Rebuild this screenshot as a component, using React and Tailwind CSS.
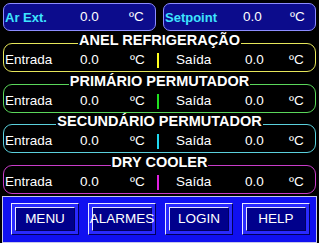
import React from "react";

const sections = [
  { title: "ANEL REFRIGERAÇÃO", border: "border-[#e6e65a]", div: "bg-[#ffff20]", mt: "mt-[12px]" },
  { title: "PRIMÁRIO PERMUTADOR", border: "border-[#5ad65a]", div: "bg-[#20e020]", mt: "mt-[12px]" },
  { title: "SECUNDÁRIO PERMUTADOR", border: "border-[#5ad0dc]", div: "bg-[#20d8f0]", mt: "mt-[11px]" },
  { title: "DRY COOLER", border: "border-[#c83cc8]", div: "bg-[#e020e0]", mt: "mt-[12px]" },
];

const buttons = ["MENU", "ALARMES", "LOGIN", "HELP"];

function TopBox({ label, labelW, valueW }) {
  return (
    <div className="w-[153px] h-[28px] rounded-[7px] border border-[#8c8cff] bg-[#0c0c8c] flex items-center pl-[1px] text-[13.5px] leading-none">
      <span className={`${labelW} font-bold text-[13px] text-[#3ee4ff]`}>{label}</span>
      <span className={valueW}>0.0</span>
      <span>ºC</span>
    </div>
  );
}

export default function App() {
  return (
    <div className="w-[319px] h-[243px] bg-black text-white overflow-hidden flex flex-col font-['Liberation_Sans',Arial,sans-serif]">
      <div className="flex gap-[7px] pl-[3px] pt-[3px]">
        <TopBox label="Ar Ext." labelW="w-[75px]" valueW="w-[49px]" />
        <TopBox label="Setpoint" labelW="w-[78px]" valueW="w-[47px]" />
      </div>

      {sections.map((s) => (
        <div
          key={s.title}
          className={`${s.mt} mx-[3px] w-[313px] h-[29px] relative rounded-[9px] border ${s.border}`}
        >
          <div className="absolute -top-[11px] left-0 right-0 flex justify-center">
            <span className="bg-black px-[1px] text-[14.5px] font-bold leading-[14px] whitespace-nowrap">
              {s.title}
            </span>
          </div>
          <div className="h-full flex items-center pt-[5px] pl-[1px] text-[13.5px] leading-none">
            <span className="w-[75px]">Entrada</span>
            <span className="w-[50px]">0.0</span>
            <span className="w-[27px]">ºC</span>
            <span className={`w-[2px] h-[15px] ${s.div}`} />
            <span className="ml-[17px] w-[69px]">Saída</span>
            <span className="w-[44px]">0.0</span>
            <span>ºC</span>
          </div>
        </div>
      ))}

      <div className="mt-[2px] mx-[2px] h-[47px] border border-[#c8c8e8] bg-[#1010f0] flex gap-[9px] pl-[8px] pt-[6px]">
        {buttons.map((b) => (
          <div
            key={b}
            className="w-[68px] h-[32px] border border-t-[#e8e8ff] border-l-[#e8e8ff] border-r-[#00005a] border-b-[#00005a] bg-[#2a2aff] p-[3px]"
          >
            <div className="h-full border border-t-[#e8e8ff] border-l-[#e8e8ff] border-r-[#000060] border-b-[#000060] bg-[#00008c] flex items-center justify-center text-[13.5px] leading-none whitespace-nowrap">
              {b}
            </div>
          </div>
        ))}
      </div>
    </div>
  );
}
